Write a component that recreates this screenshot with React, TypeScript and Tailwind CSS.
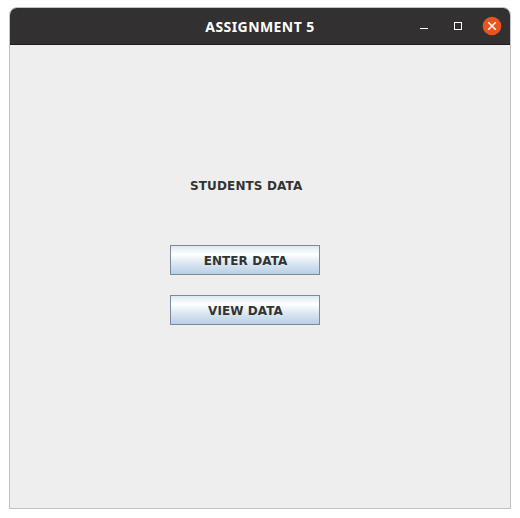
import React from "react";

function WindowControls() {
  return (
    <div className="flex items-center">
      <button type="button" aria-label="Minimize" className="flex h-9 w-[34px] justify-center">
        <svg width="34" height="36" shapeRendering="crispEdges">
          <rect x="13" y="20" width="8" height="1" fill="#fff" />
        </svg>
      </button>
      <button type="button" aria-label="Maximize" className="flex h-9 w-[34px] justify-center">
        <svg width="34" height="36" shapeRendering="crispEdges">
          <path d="M13 14h8v8h-8zM14 15v6h6v-6z" fill="#fff" fillRule="evenodd" />
        </svg>
      </button>
      <button type="button" aria-label="Close" className="flex h-9 w-[34px] justify-center">
        <svg width="34" height="36">
          <circle cx="17" cy="18" r="9.3" fill="#e95420" />
          <path d="M13.2 14.2l7.6 7.6M20.8 14.2l-7.6 7.6" stroke="#fff" strokeWidth="1.5" />
        </svg>
      </button>
    </div>
  );
}

function TitleBar({ title }: { title: string }) {
  return (
    <header className="grid h-[37px] grid-cols-[1fr_auto_1fr] items-start border-b border-[#1d1b1c] bg-[#323031]">
      <span />
      <h1 className="font-['Noto_Sans',sans-serif] text-[14px] leading-[38px] font-bold tracking-[0.43px] whitespace-nowrap text-white">
        {title}
      </h1>
      <div className="flex justify-end pr-px">
        <WindowControls />
      </div>
    </header>
  );
}

function MetalButton({ children }: { children: React.ReactNode }) {
  return (
    <button
      type="button"
      className="flex h-[30px] w-[150px] items-center justify-center border border-[#7a8a99] bg-[linear-gradient(to_bottom,#dde8f3_0%,#ffffff_30%,#dde8f3_60%,#b8cfe5_100%)] pt-px pl-px text-xs font-bold tracking-[0.08px] text-[#333333]"
    >
      {children}
    </button>
  );
}

export default function App() {
  return (
    <div className="h-[518px] w-[520px] bg-white pt-[7px] pl-[9px] font-['DejaVu_Sans',sans-serif]">
      <div className="h-[502px] w-[502px] overflow-hidden rounded-t-[8px] border border-[#c2c2c2] bg-[#eeeeee]">
        <TitleBar title="ASSIGNMENT 5" />
        <main className="flex flex-col items-start gap-5 pt-[130px] pl-[160px]">
          <p className="mb-[30px] h-5 pl-5 text-xs leading-[22px] font-bold tracking-[0.13px] text-[#333333]">
            STUDENTS DATA
          </p>
          <MetalButton>ENTER DATA</MetalButton>
          <MetalButton>VIEW DATA</MetalButton>
        </main>
      </div>
    </div>
  );
}
